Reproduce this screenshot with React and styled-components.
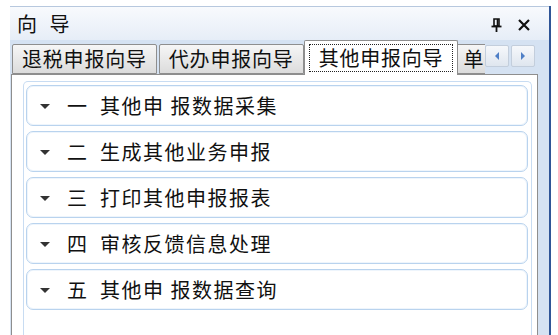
import styled, { createGlobalStyle } from 'styled-components';

const GlobalStyle = createGlobalStyle`
  html, body {
    margin: 0;
    padding: 0;
    background: #ffffff;
    overflow: hidden;
  }
  body {
    font-family: "Noto Sans CJK SC", "Noto Sans", sans-serif;
    color: #111;
  }
`;

// Styled Components
const Window = styled.div`
  margin: 6px 0 0 10px;
  width: 539px;
  height: 329px;
  background: #d5e2f2;
  border-right: 2px solid #2f5597;
  display: flex;
  flex-direction: column;
  overflow: hidden;
`;

const TitleBar = styled.div`
  height: 33px;
  flex: none;
  border-top: 1px solid #b7c8de;
  background: linear-gradient(#f8fafd, #e6edf7);
  display: flex;
  align-items: center;
  justify-content: space-between;
  padding: 0 19px 0 7px;
`;

const Title = styled.span`
  font-size: 20px;
  letter-spacing: 4px;
  line-height: 1;
  color: #111;
`;

const TitleButtons = styled.div`
  display: flex;
  align-items: center;
  gap: 16px;
  margin-top: 2px;
`;

const TabStrip = styled.div`
  height: 35px;
  flex: none;
  display: flex;
  align-items: flex-start;
  padding-left: 2px;
  position: relative;
  z-index: 1;
`;

const TabList = styled.div`
  width: 473px;
  height: 35px;
  display: flex;
  align-items: flex-end;
  overflow: hidden;
  flex: none;
`;

const Tab = styled.div`
  flex: none;
  box-sizing: border-box;
  height: ${(p) => (p.$active ? '35px' : '30px')};
  margin: ${(p) => (p.$active ? '0 -2px 0 -2px' : '0 2px 1px 0')};
  padding: ${(p) => (p.$active ? '3px 4px 0' : p.$clipped ? '0 60px 0 6px' : '0 9px')};
  border: 1px solid #8e8e8e;
  border-bottom: ${(p) => (p.$active ? 'none' : '1px solid #8e8e8e')};
  border-radius: 2px 2px 0 0;
  background: ${(p) => (p.$active ? '#ffffff' : 'linear-gradient(#f6f6f6, #dcdcdc)')};
  font-size: 20px;
  letter-spacing: 0.8px;
  line-height: 28px;
  white-space: nowrap;
  position: relative;
  z-index: ${(p) => (p.$active ? 2 : 1)};
`;

const FocusRect = styled.span`
  display: block;
  border: 1px dotted #222;
  padding: 0 9px 0 9px;
  line-height: 26px;
`;

const ScrollButtons = styled.div`
  display: flex;
  gap: 2px;
  margin: 5px 0 0 0;
`;

const ScrollButton = styled.div`
  width: 24px;
  height: 22px;
  box-sizing: border-box;
  border: 1px solid #c3cedc;
  border-radius: 2px;
  background: linear-gradient(#f6f8fb, #dfe6ef);
  display: flex;
  align-items: center;
  justify-content: center;
`;

const TabPage = styled.div`
  flex: 1;
  margin: -1px 11px 0 1px;
  border: 1px solid #8e8e8e;
  border-bottom: none;
  background: #ffffff;
  padding: 6px 5px 0 11px;
  display: flex;
`;

const GroupPanel = styled.div`
  flex: 1;
  border: 1px solid #c8dcf2;
  border-bottom: none;
  border-radius: 5px 5px 0 0;
  padding: 3px 3px 0 2px;
  display: flex;
  flex-direction: column;
  gap: 5px;
`;

const Item = styled.div`
  height: 41px;
  box-sizing: border-box;
  border: 1px solid #b9d3ee;
  border-radius: 7px;
  box-shadow: inset 0 0 0 1px #eef5fc;
  background: #ffffff;
  display: flex;
  align-items: center;
  padding-left: 13px;
  font-size: 20px;
  letter-spacing: 1.5px;
  color: #111;
`;

const Caret = styled.span`
  width: 0;
  height: 0;
  border-left: 5px solid transparent;
  border-right: 5px solid transparent;
  border-top: 5px solid #333;
  margin-right: 17px;
  margin-top: 2px;
`;

const Numeral = styled.span`
  width: 20px;
  margin-right: 13px;
`;

const PinIcon = () => (
  <svg width="11" height="14" viewBox="0 0 11 14">
    <path d="M3 1h5v7H3z" fill="none" stroke="#111" strokeWidth="1.6" />
    <path d="M6.5 1v7" stroke="#111" strokeWidth="1.6" />
    <path d="M0.5 8.5h10" stroke="#111" strokeWidth="1.8" />
    <path d="M5.5 8.5v5.5" stroke="#111" strokeWidth="1.8" />
  </svg>
);

const CloseIcon = () => (
  <svg width="12" height="12" viewBox="0 0 12 12">
    <path d="M1 1l10 10M11 1L1 11" stroke="#111" strokeWidth="2.2" />
  </svg>
);

const Arrow = ({ dir }) => (
  <svg width="6" height="8" viewBox="0 0 6 8">
    <path d={dir === 'left' ? 'M5 0v8L1 4z' : 'M1 0v8l4-4z'} fill="#4f7fc6" />
  </svg>
);

const tabs = ['退税申报向导', '代办申报向导', '其他申报向导', '单'];
const items = [
  ['一', '其他申 报数据采集'],
  ['二', '生成其他业务申报'],
  ['三', '打印其他申报报表'],
  ['四', '审核反馈信息处理'],
  ['五', '其他申 报数据查询'],
];

// Component
export default function App() {
  return (
    <>
      <GlobalStyle />
      <Window>
        <TitleBar>
          <Title>向 导</Title>
          <TitleButtons>
            <PinIcon />
            <CloseIcon />
          </TitleButtons>
        </TitleBar>

        <TabStrip>
          <TabList>
            {tabs.map((t, i) =>
              i === 2 ? (
                <Tab key={t} $active>
                  <FocusRect>{t}</FocusRect>
                </Tab>
              ) : (
                <Tab key={t} $clipped={i === 3}>{t}</Tab>
              )
            )}
          </TabList>
          <ScrollButtons>
            <ScrollButton><Arrow dir="left" /></ScrollButton>
            <ScrollButton><Arrow dir="right" /></ScrollButton>
          </ScrollButtons>
        </TabStrip>

        <TabPage>
          <GroupPanel>
            {items.map(([n, label]) => (
              <Item key={n}>
                <Caret />
                <Numeral>{n}</Numeral>
                <span>{label}</span>
              </Item>
            ))}
          </GroupPanel>
        </TabPage>
      </Window>
    </>
  );
}
